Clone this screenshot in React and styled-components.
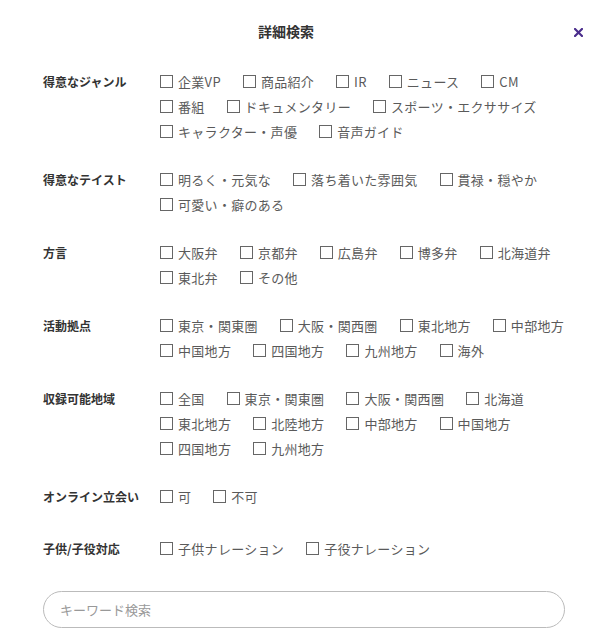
import React from 'react';
import styled, { createGlobalStyle } from 'styled-components';

const GlobalStyle = createGlobalStyle`
    body {
        margin: 0;
        background: #fff;
        font-family: "Noto Sans CJK JP", "Noto Sans", sans-serif;
    }
`;

const Modal = styled.div`
    width: 616px;
    padding-bottom: 15px;
`;

const Header = styled.div`
    display: flex;
    align-items: center;
    padding-top: 20px;
    height: 22px;
`;

const Title = styled.h2`
    flex: 1;
    margin: 0;
    text-align: center;
    font-size: 14px;
    font-weight: 700;
    line-height: 22px;
    color: #333;
`;

const Close = styled.div`
    width: 44px;
    padding-left: 2px;
    box-sizing: border-box;
    display: flex;
    align-items: center;
    height: 22px;
    margin-top: 2px;
    cursor: pointer;
`;

const Body = styled.div`
    padding: 27px 44px 0 43px;
`;

const Section = styled.div`
    display: flex;
    align-items: flex-start;
    margin-top: ${({gap}) => gap}px;
`;

const Label = styled.div`
    width: 117px;
    flex-shrink: 0;
    font-size: 12px;
    font-weight: 700;
    line-height: 25px;
    color: #333;
    white-space: nowrap;
`;

const Options = styled.div`
    flex: 1;
    display: flex;
    flex-wrap: wrap;
    column-gap: 22px;
`;

const Option = styled.label`
    display: flex;
    align-items: center;
    gap: 5px;
    height: 25px;
    font-size: 13px;
    letter-spacing: 0.3px;
    color: #5a5a5a;
    cursor: pointer;
    white-space: nowrap;
`;

const Box = styled.input`
    appearance: none;
    margin: 0;
    width: 13px;
    height: 13px;
    border: 1px solid #666;
    background: #fff;
    box-sizing: border-box;
    flex-shrink: 0;
`;

const Search = styled.input`
    display: block;
    box-sizing: border-box;
    width: calc(100% - 7px);
    height: 37px;
    margin-top: 30px;
    border: 1px solid #bbb;
    border-radius: 19px;
    padding: 0 16px;
    font-family: inherit;
    font-size: 13px;
    color: #555;
    outline: none;
    &::placeholder {
        color: #999;
    }
`;

const sections = [
    { label: '得意なジャンル', items: ['企業VP', '商品紹介', 'IR', 'ニュース', 'CM', '番組', 'ドキュメンタリー', 'スポーツ・エクササイズ', 'キャラクター・声優', '音声ガイド'] },
    { label: '得意なテイスト', items: ['明るく・元気な', '落ち着いた雰囲気', '貫禄・穏やか', '可愛い・癖のある'] },
    { label: '方言', items: ['大阪弁', '京都弁', '広島弁', '博多弁', '北海道弁', '東北弁', 'その他'] },
    { label: '活動拠点', items: ['東京・関東圏', '大阪・関西圏', '東北地方', '中部地方', '中国地方', '四国地方', '九州地方', '海外'] },
    { label: '収録可能地域', items: ['全国', '東京・関東圏', '大阪・関西圏', '北海道', '東北地方', '北陸地方', '中部地方', '中国地方', '四国地方', '九州地方'] },
    { label: 'オンライン立会い', items: ['可', '不可'] },
    { label: '子供/子役対応', items: ['子供ナレーション', '子役ナレーション'], gap: 27 },
];

export default function App() {
    return (
        <Modal>
            <GlobalStyle/>
            <Header>
                <Title>詳細検索</Title>
                <Close>
                    <svg width="9" height="9" viewBox="0 0 9 9">
                        <path d="M1 1L8 8M8 1L1 8" stroke="#4a2d8c" strokeWidth="2.2" strokeLinecap="square"/>
                    </svg>
                </Close>
            </Header>
            <Body>
                {sections.map((s, i) => (
                    <Section key={s.label} gap={i === 0 ? 0 : (s.gap || 23)}>
                        <Label>{s.label}</Label>
                        <Options>
                            {s.items.map((item) => (
                                <Option key={item}>
                                    <Box type="checkbox"/>
                                    {item}
                                </Option>
                            ))}
                        </Options>
                    </Section>
                ))}
                <Search placeholder="キーワード検索"/>
            </Body>
        </Modal>
    );
}
